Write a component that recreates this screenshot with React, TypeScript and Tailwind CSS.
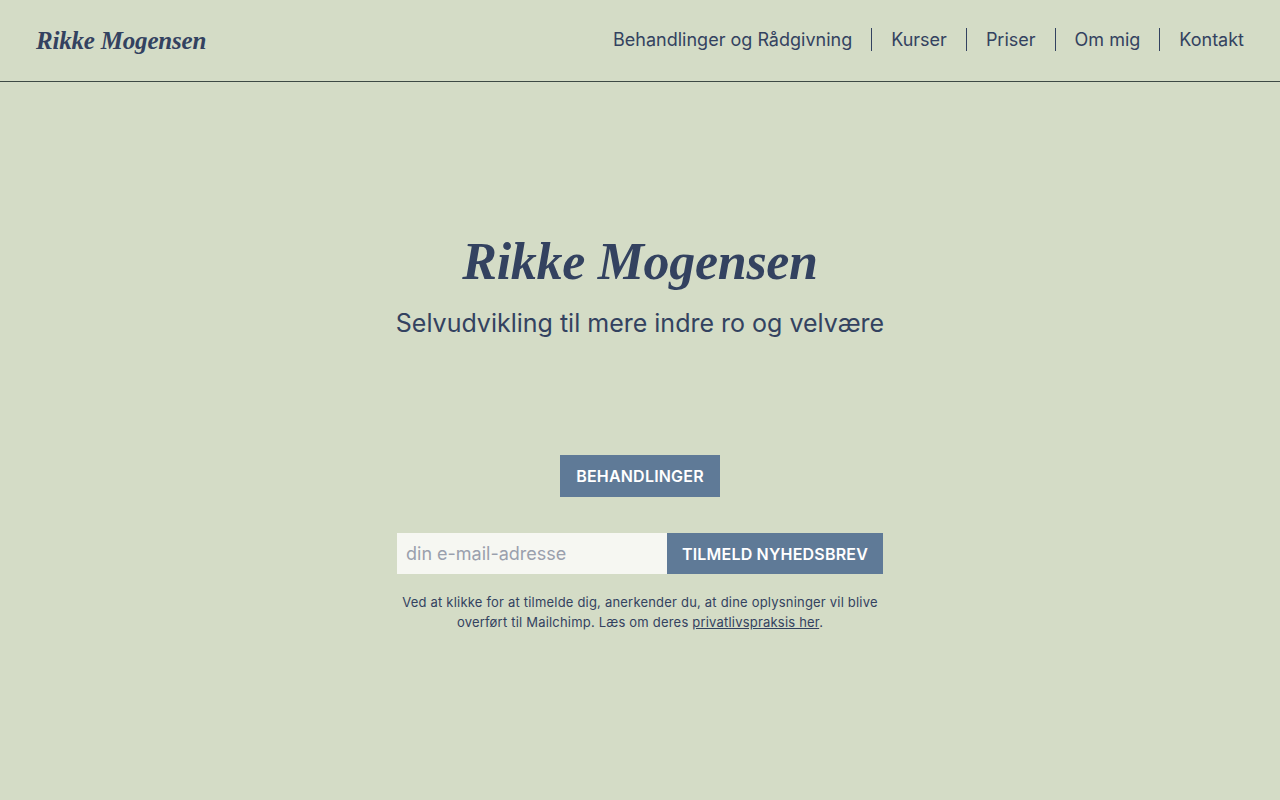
export default function App() {
  const nav = ["Behandlinger og Rådgivning", "Kurser", "Priser", "Om mig", "Kontakt"];
  return (
    <div className="min-h-[800px] bg-[#d4dcc6] text-[#334260] font-['Inter','Lato',sans-serif]">
      {/* Header */}
      <header className="h-[82px] flex items-center justify-between px-9 border-b border-[#3d4a45]">
        <a className="text-[25px] font-bold italic tracking-[-0.2px] font-['Liberation_Serif','DejaVu_Serif',serif]">
          Rikke Mogensen
        </a>
        <nav className="flex items-center -mt-[2px]">
          {nav.map((item, i) => (
            <div key={item} className="flex items-center">
              {i > 0 && <span className="w-px h-[23px] bg-[#334260] mx-[19px]" />}
              <span className="text-[18px] leading-none">{item}</span>
            </div>
          ))}
        </nav>
      </header>

      {/* Hero */}
      <main className="flex flex-col items-center">
        <h1 className="mt-[150px] text-[52px] leading-[60px] font-bold italic tracking-[-0.3px] font-['Liberation_Serif','DejaVu_Serif',serif]">
          Rikke Mogensen
        </h1>
        <p className="mt-[14px] text-[25px] leading-[34px]">Selvudvikling til mere indre ro og velvære</p>

        <button className="mt-[115px] w-[160px] h-[42px] bg-[#5f7a97] text-white text-[16px] font-semibold tracking-[0.2px]">
          BEHANDLINGER
        </button>

        {/* Newsletter */}
        <form className="mt-[36px] flex w-[486px] h-[41px]">
          <input
            className="w-[270px] h-full bg-[#f6f7f2] px-[9px] text-[18px] placeholder:text-[#9aa0ad] outline-none"
            placeholder="din e-mail-adresse"
          />
          <button type="button" className="flex-1 h-full bg-[#5f7a97] text-white text-[16px] font-semibold tracking-[0.2px]">
            TILMELD NYHEDSBREV
          </button>
        </form>
        <p className="mt-[18px] w-[500px] text-center text-[13px] leading-[20px] tracking-[0.2px]">
          Ved at klikke for at tilmelde dig, anerkender du, at dine oplysninger vil blive overført til Mailchimp. Læs om
          deres <a className="underline">privatlivspraksis her</a>.
        </p>
      </main>
    </div>
  );
}
